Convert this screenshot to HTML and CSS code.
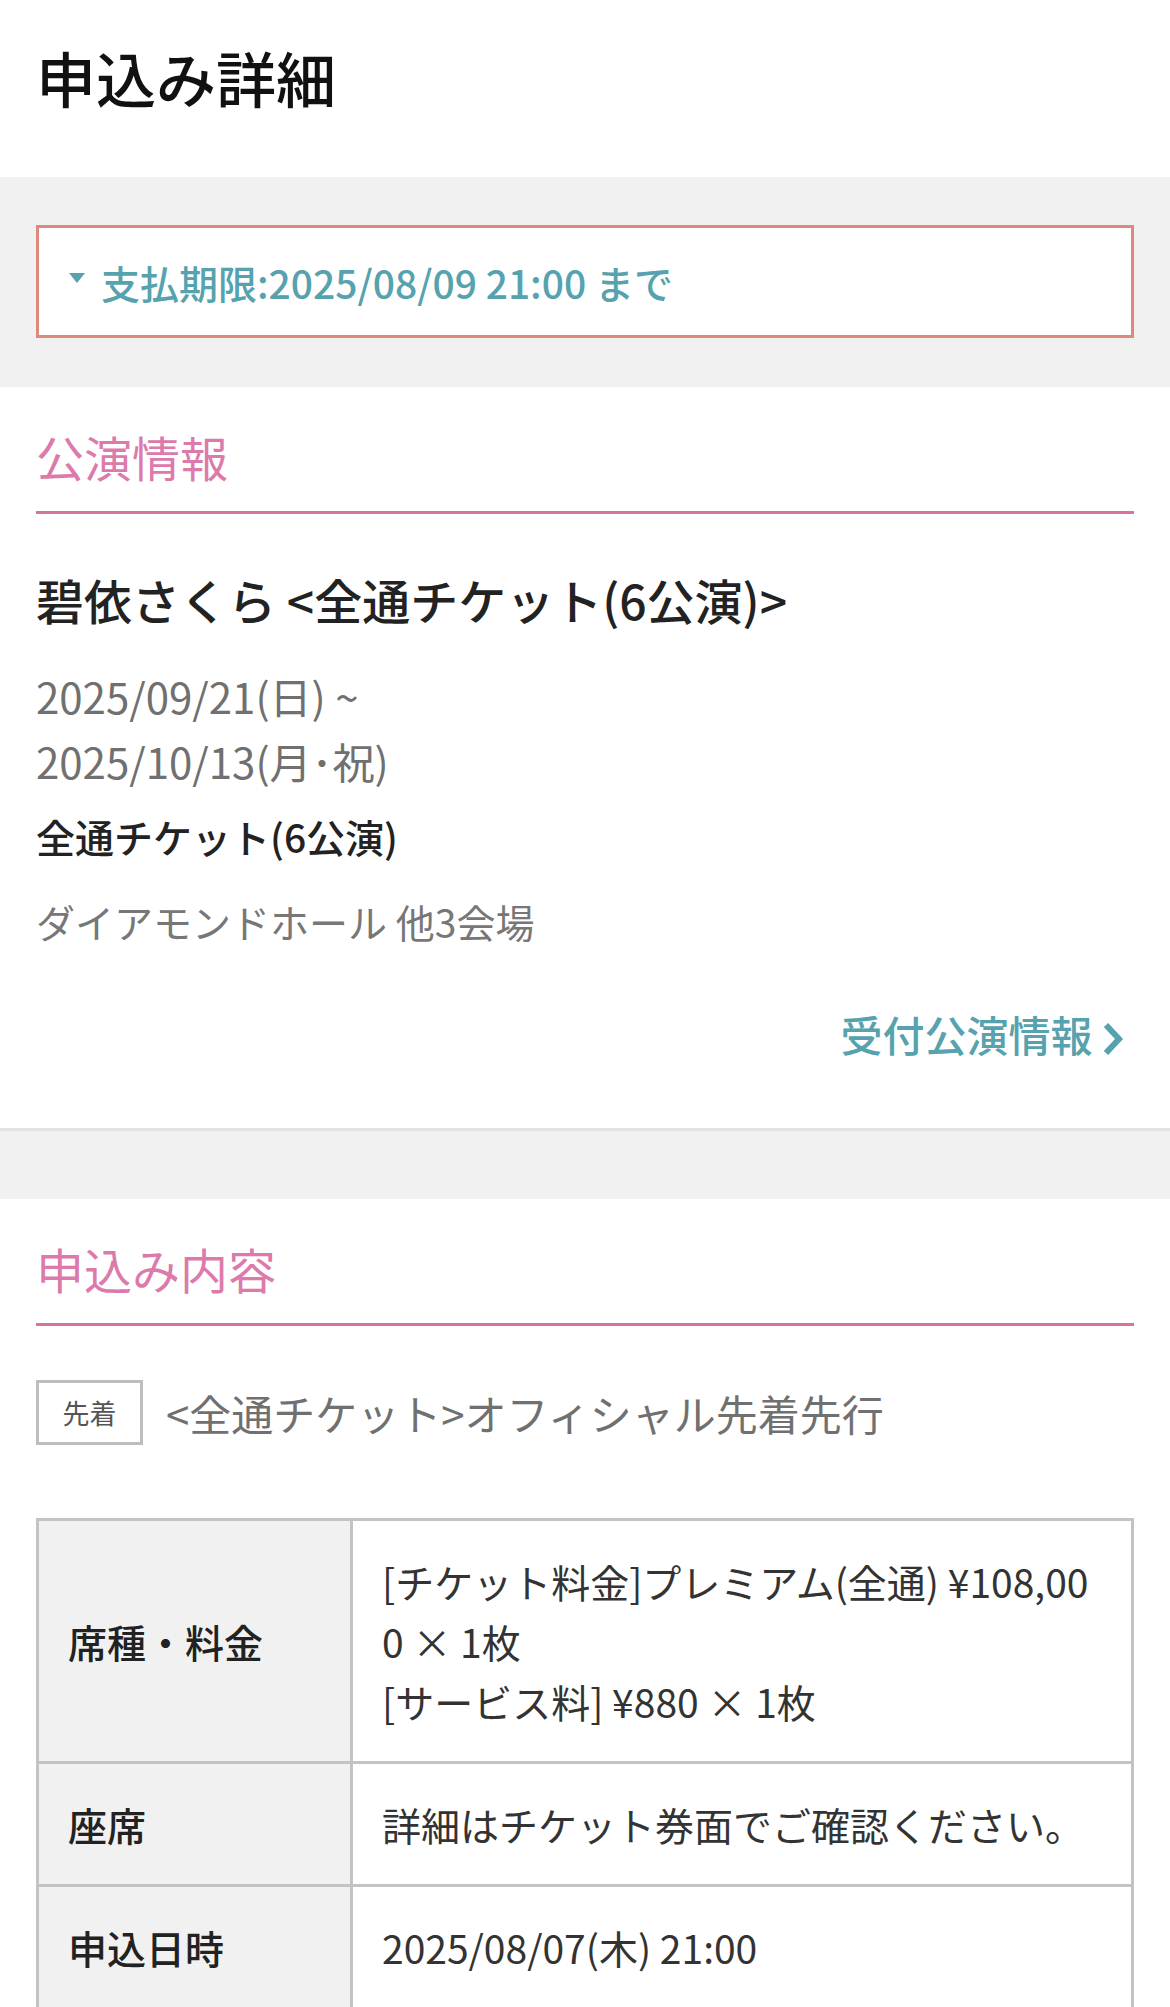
FILE: index.html
```html
<!DOCTYPE html>
<html lang="ja">
<head>
    <meta charset="UTF-8">
    <meta name="viewport" content="width=device-width, initial-scale=1.0">
    <title>申込み詳細</title>
    <link rel="stylesheet" href="styles.css">
</head>
<body>

<div class="page-head">
    <h1>申込み詳細</h1>
</div>

<div class="notice-band">
    <div class="notice-box">
        <span class="notice-arrow"></span>
        <span class="notice-text">支払期限:2025/08/09 21:00 まで</span>
    </div>
</div>

<!-- 公演情報 -->
<div class="section">
    <h2 class="section-title">公演情報</h2>
    <div class="event-name">碧依さくら &lt;全通チケット(6公演)&gt;</div>
    <div class="event-date">2025/09/21(日) ~<br>2025/10/13(月･祝)</div>
    <div class="event-ticket">全通チケット(6公演)</div>
    <div class="event-venue">ダイアモンドホール 他3会場</div>
    <div class="link-row">
        <a href="#" class="more-link">受付公演情報
            <svg class="chevron" width="22" height="34" viewBox="0 0 22 34"><polyline points="4,3 17,17 4,31" fill="none" stroke="#56a2ae" stroke-width="6"/></svg>
        </a>
    </div>
</div>

<div class="spacer"></div>

<!-- 申込み内容 -->
<div class="section">
    <h2 class="section-title">申込み内容</h2>
    <div class="entry-type">
        <span class="badge">先着</span>
        <span class="entry-name">&lt;全通チケット&gt;オフィシャル先着先行</span>
    </div>
    <table class="detail-table">
        <tr>
            <th>席種・料金</th>
            <td>[チケット料金]プレミアム(全通) ¥108,000 × 1枚<br>[サービス料] ¥880 × 1枚</td>
        </tr>
        <tr>
            <th>座席</th>
            <td>詳細はチケット券面でご確認ください。</td>
        </tr>
        <tr>
            <th>申込日時</th>
            <td>2025/08/07(木) 21:00</td>
        </tr>
    </table>
</div>

</body>
</html>
```

FILE: styles.css
```css
body {
    font-family: "Noto Sans CJK JP", "Noto Sans", sans-serif;
    background-color: #ffffff;
    color: #222222;
    margin: 0;
    padding: 0;
}
.page-head {
    padding: 36px 36px 60px;
}
.page-head h1 {
    margin: 0;
    font-size: 60px;
    line-height: 81px;
    font-weight: 500;
    color: #111111;
}
.notice-band {
    background-color: #f1f1f1;
    padding: 48px 36px 49px;
}
.notice-box {
    background-color: #ffffff;
    border: 3px solid #dd8a7c;
    height: 107px;
    display: flex;
    align-items: center;
    padding-left: 30px;
}
.notice-arrow {
    width: 0;
    height: 0;
    border-left: 8px solid transparent;
    border-right: 8px solid transparent;
    border-top: 10px solid #56a2ae;
    margin-right: 16px;
    margin-top: -8px;
}
.notice-text {
    color: #56a2ae;
    font-size: 39px;
    font-weight: 500;
}
.section {
    padding: 0 36px;
}
.section-title {
    margin: 0;
    padding: 35px 0 21px;
    font-size: 48px;
    line-height: 68px;
    font-weight: 400;
    color: #dc7aab;
    border-bottom: 3px solid #d6749f;
}
.event-name {
    margin-top: 51px;
    font-size: 48px;
    line-height: 69px;
    font-weight: 500;
    color: #222222;
}
.event-date {
    margin-top: 29px;
    font-size: 42px;
    line-height: 65px;
    color: #707070;
}
.event-ticket {
    margin-top: 11px;
    font-size: 39px;
    line-height: 65px;
    font-weight: 500;
    color: #222222;
}
.event-venue {
    margin-top: 20px;
    font-size: 39px;
    line-height: 65px;
    color: #777777;
}
.link-row {
    margin-top: 47px;
    padding-bottom: 62px;
    text-align: right;
}
.more-link {
    color: #56a2ae;
    font-size: 42px;
    line-height: 65px;
    font-weight: 500;
    text-decoration: none;
    margin-right: 10px;
}
.chevron {
    vertical-align: -4px;
}
.spacer {
    height: 68px;
    background-color: #f1f1f1;
    border-top: 3px solid #e2e2e2;
}
.entry-type {
    margin-top: 54px;
    display: flex;
    align-items: center;
}
.badge {
    box-sizing: border-box;
    width: 107px;
    height: 65px;
    border: 3px solid #bdbdbd;
    color: #555555;
    font-size: 27px;
    display: flex;
    align-items: center;
    justify-content: center;
}
.entry-name {
    margin-left: 23px;
    font-size: 42px;
    color: #707070;
}
.detail-table {
    margin-top: 73px;
    width: 100%;
    border-collapse: collapse;
    border: 3px solid #c3c3c3;
}
.detail-table th,
.detail-table td {
    border: 3px solid #c3c3c3;
    font-size: 39px;
    line-height: 60px;
    padding: 30px 30px 30px 29px;
    text-align: left;
    vertical-align: middle;
}
.detail-table th {
    width: 252px;
    background-color: #f1f1f1;
    font-weight: 500;
    color: #222222;
}
.detail-table td {
    color: #333333;
    word-break: break-all;
}
```
